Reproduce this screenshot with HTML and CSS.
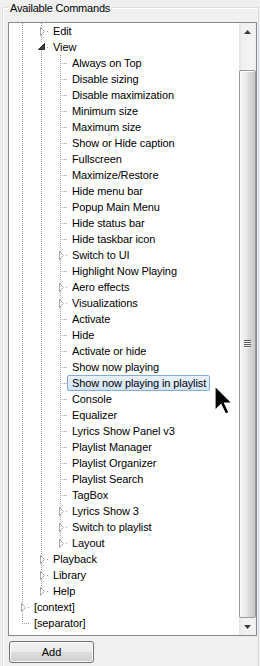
FILE: index.html
```html
<!DOCTYPE html>
<html>
<head>
<meta charset="utf-8">
<link rel="stylesheet" href="styles.css">
</head>
<body>
<div class="group">
  <div class="legend">Available Commands</div>
  <div class="tree">
    <div class="list">
      <div class="row"><span class="g v"></span><span class="c col"><svg class="tri-c" width="6" height="9" viewBox="0 0 6 9"><polygon points="0.5,0.5 0.5,8.5 4.5,4.5"/></svg></span><span class="t">Edit</span></div>
      <div class="row"><span class="g v"></span><span class="c exp"><svg class="tri-e" width="9" height="9" viewBox="0 0 9 9"><polygon points="7.5,1.5 7.5,7.5 1.5,7.5"/></svg></span><span class="t">View</span></div>
      <div class="row"><span class="g v"></span><span class="g v"></span><span class="c leaf"></span><span class="t">Always on Top</span></div>
      <div class="row"><span class="g v"></span><span class="g v"></span><span class="c leaf"></span><span class="t">Disable sizing</span></div>
      <div class="row"><span class="g v"></span><span class="g v"></span><span class="c leaf"></span><span class="t">Disable maximization</span></div>
      <div class="row"><span class="g v"></span><span class="g v"></span><span class="c leaf"></span><span class="t">Minimum size</span></div>
      <div class="row"><span class="g v"></span><span class="g v"></span><span class="c leaf"></span><span class="t">Maximum size</span></div>
      <div class="row"><span class="g v"></span><span class="g v"></span><span class="c leaf"></span><span class="t">Show or Hide caption</span></div>
      <div class="row"><span class="g v"></span><span class="g v"></span><span class="c leaf"></span><span class="t">Fullscreen</span></div>
      <div class="row"><span class="g v"></span><span class="g v"></span><span class="c leaf"></span><span class="t">Maximize/Restore</span></div>
      <div class="row"><span class="g v"></span><span class="g v"></span><span class="c leaf"></span><span class="t">Hide menu bar</span></div>
      <div class="row"><span class="g v"></span><span class="g v"></span><span class="c leaf"></span><span class="t">Popup Main Menu</span></div>
      <div class="row"><span class="g v"></span><span class="g v"></span><span class="c leaf"></span><span class="t">Hide status bar</span></div>
      <div class="row"><span class="g v"></span><span class="g v"></span><span class="c leaf"></span><span class="t">Hide taskbar icon</span></div>
      <div class="row"><span class="g v"></span><span class="g v"></span><span class="c col"><svg class="tri-c" width="6" height="9" viewBox="0 0 6 9"><polygon points="0.5,0.5 0.5,8.5 4.5,4.5"/></svg></span><span class="t">Switch to UI</span></div>
      <div class="row"><span class="g v"></span><span class="g v"></span><span class="c leaf"></span><span class="t">Highlight Now Playing</span></div>
      <div class="row"><span class="g v"></span><span class="g v"></span><span class="c col"><svg class="tri-c" width="6" height="9" viewBox="0 0 6 9"><polygon points="0.5,0.5 0.5,8.5 4.5,4.5"/></svg></span><span class="t">Aero effects</span></div>
      <div class="row"><span class="g v"></span><span class="g v"></span><span class="c col"><svg class="tri-c" width="6" height="9" viewBox="0 0 6 9"><polygon points="0.5,0.5 0.5,8.5 4.5,4.5"/></svg></span><span class="t">Visualizations</span></div>
      <div class="row"><span class="g v"></span><span class="g v"></span><span class="c leaf"></span><span class="t">Activate</span></div>
      <div class="row"><span class="g v"></span><span class="g v"></span><span class="c leaf"></span><span class="t">Hide</span></div>
      <div class="row"><span class="g v"></span><span class="g v"></span><span class="c leaf"></span><span class="t">Activate or hide</span></div>
      <div class="row"><span class="g v"></span><span class="g v"></span><span class="c leaf"></span><span class="t">Show now playing</span></div>
      <div class="row"><span class="g v"></span><span class="g v"></span><span class="c leaf"></span><span class="t sel">Show now playing in playlist</span></div>
      <div class="row"><span class="g v"></span><span class="g v"></span><span class="c leaf"></span><span class="t">Console</span></div>
      <div class="row"><span class="g v"></span><span class="g v"></span><span class="c leaf"></span><span class="t">Equalizer</span></div>
      <div class="row"><span class="g v"></span><span class="g v"></span><span class="c leaf"></span><span class="t">Lyrics Show Panel v3</span></div>
      <div class="row"><span class="g v"></span><span class="g v"></span><span class="c leaf"></span><span class="t">Playlist Manager</span></div>
      <div class="row"><span class="g v"></span><span class="g v"></span><span class="c leaf"></span><span class="t">Playlist Organizer</span></div>
      <div class="row"><span class="g v"></span><span class="g v"></span><span class="c leaf"></span><span class="t">Playlist Search</span></div>
      <div class="row"><span class="g v"></span><span class="g v"></span><span class="c leaf"></span><span class="t">TagBox</span></div>
      <div class="row"><span class="g v"></span><span class="g v"></span><span class="c col"><svg class="tri-c" width="6" height="9" viewBox="0 0 6 9"><polygon points="0.5,0.5 0.5,8.5 4.5,4.5"/></svg></span><span class="t">Lyrics Show 3</span></div>
      <div class="row"><span class="g v"></span><span class="g v"></span><span class="c col"><svg class="tri-c" width="6" height="9" viewBox="0 0 6 9"><polygon points="0.5,0.5 0.5,8.5 4.5,4.5"/></svg></span><span class="t">Switch to playlist</span></div>
      <div class="row"><span class="g v"></span><span class="g v"></span><span class="c col last"><svg class="tri-c" width="6" height="9" viewBox="0 0 6 9"><polygon points="0.5,0.5 0.5,8.5 4.5,4.5"/></svg></span><span class="t">Layout</span></div>
      <div class="row"><span class="g v"></span><span class="c col"><svg class="tri-c" width="6" height="9" viewBox="0 0 6 9"><polygon points="0.5,0.5 0.5,8.5 4.5,4.5"/></svg></span><span class="t">Playback</span></div>
      <div class="row"><span class="g v"></span><span class="c col"><svg class="tri-c" width="6" height="9" viewBox="0 0 6 9"><polygon points="0.5,0.5 0.5,8.5 4.5,4.5"/></svg></span><span class="t">Library</span></div>
      <div class="row"><span class="g v"></span><span class="c col last"><svg class="tri-c" width="6" height="9" viewBox="0 0 6 9"><polygon points="0.5,0.5 0.5,8.5 4.5,4.5"/></svg></span><span class="t">Help</span></div>
      <div class="row"><span class="c col"><svg class="tri-c" width="6" height="9" viewBox="0 0 6 9"><polygon points="0.5,0.5 0.5,8.5 4.5,4.5"/></svg></span><span class="t">[context]</span></div>
      <div class="row"><span class="c leaf last"></span><span class="t">[separator]</span></div>
    </div>
    <div class="sb">
      <div class="sb-btn"><svg width="7" height="4" viewBox="0 0 7 4"><polygon points="3.5,0 7,4 0,4"/></svg></div>
      <div class="sb-track"></div>
      <div class="thumb"><div class="grip"></div></div>
      <div class="sb-btn"><svg width="7" height="4" viewBox="0 0 7 4"><polygon points="0,0 7,0 3.5,4"/></svg></div>
    </div>
  </div>
  <div class="btn">Add</div>
</div>
<svg class="cursor" width="20" height="31" viewBox="0 0 20 31"><polygon points="1,1 1,25.5 7,19.5 11.5,29 15,27.5 10.5,18 18,18" /></svg>
</body>
</html>
```
FILE: styles.css
```css
html, body { margin: 0; }
body {
  background: #f0f0f0;
  font: 11px "Liberation Sans", Arial, sans-serif;
  color: #000;
  width: 260px;
  height: 666px;
  overflow: hidden;
  position: relative;
}
.group {
  margin: 7px 1px 0 2px;
  border: 1px solid #d5dfe5;
  border-bottom: none;
  height: 659px;
  box-sizing: border-box;
  display: flex;
  flex-direction: column;
  box-shadow: inset 1px 1px 0 #fff;
}
.legend {
  align-self: flex-start;
  margin: -6px 0 0 5px;
  padding: 0 2px;
  background: #f0f0f0;
  line-height: 13px;
  letter-spacing: -0.2px;
}
.tree {
  margin: 7px 1px 0 5px;
  height: 614px;
  box-sizing: border-box;
  border: 1px solid #828790;
  background: #fff;
  display: flex;
}
.list {
  flex: 1;
  padding-left: 4px;
  overflow: hidden;
  min-width: 0;
}
.row {
  display: flex;
  height: 16px;
  white-space: nowrap;
}
.g, .c {
  flex: none;
  position: relative;
  height: 16px;
}
.g { width: 19px; }
.c { width: 16px; }
.g.v::before, .c::before {
  content: "";
  position: absolute;
  left: 9px;
  top: 0;
  width: 1px;
  height: 16px;
  background: repeating-linear-gradient(to bottom, #a0a0a0 0 1px, transparent 1px 2px);
}
.c.last::before { height: 9px; }
.c.leaf::after {
  content: "";
  position: absolute;
  left: 11px;
  top: 8px;
  width: 5px;
  height: 1px;
  background: repeating-linear-gradient(to right, #a0a0a0 0 1px, transparent 1px 2px);
}
.c.col::after, .c.exp::after {
  content: "";
  position: absolute;
  left: 15px;
  top: 8px;
  width: 1px;
  height: 1px;
  background: #a0a0a0;
}
.tri-c {
  position: absolute;
  left: 8px;
  top: 4px;
  display: block;
}
.tri-c polygon { fill: #fff; stroke: #a6a6a6; stroke-width: 1; }
.tri-e {
  position: absolute;
  left: 5px;
  top: 3px;
  display: block;
  background: #fff;
}
.tri-e polygon { fill: #404040; stroke: #262626; stroke-width: 1; stroke-linejoin: miter; }
.t {
  height: 16px;
  box-sizing: border-box;
  border: 1px solid transparent;
  padding: 0 3px 0 4px;
  line-height: 14px;
  letter-spacing: -0.1px;
}
.t.sel {
  border-color: #84acdd;
  border-radius: 2px;
  background: linear-gradient(#eaf2fd, #d2e4fb);
}
.sb {
  width: 17px;
  flex: none;
  display: flex;
  flex-direction: column;
  background: linear-gradient(to right, #e4e4e4, #f1f1f1 20%, #f4f4f4 80%, #ececec);
}
.sb-btn {
  height: 17px;
  flex: none;
  display: flex;
  align-items: center;
  justify-content: center;
}
.sb-btn svg { display: block; fill: #3c3c3c; }
.sb-track { height: 30px; flex: none; }
.thumb {
  flex: 1;
  box-sizing: border-box;
  border: 1px solid #979797;
  border-radius: 2px;
  background: linear-gradient(to right, #f5f5f5 0%, #ececec 40%, #dcdcdc 55%, #c9c9c9 100%);
  box-shadow: inset 1px 1px 0 #fcfcfc;
  display: flex;
  align-items: center;
  justify-content: center;
}
.grip {
  width: 7px;
  height: 8px;
  background: repeating-linear-gradient(to bottom, #555 0 1px, #f8f8f8 1px 2px);
}
.btn {
  align-self: flex-start;
  margin: 5px 0 0 6px;
  width: 85px;
  height: 22px;
  box-sizing: border-box;
  border: 1px solid #707070;
  border-radius: 3px;
  background: linear-gradient(#f2f2f2 0%, #ebebeb 50%, #dddddd 51%, #cfcfcf 100%);
  box-shadow: inset 0 0 0 1px #fbfbfb;
  text-align: center;
  line-height: 20px;
}
.cursor {
  position: absolute;
  left: 214px;
  top: 385px;
}
.cursor polygon { fill: #000; stroke: #fff; stroke-width: 1.2; stroke-linejoin: miter; }
```
